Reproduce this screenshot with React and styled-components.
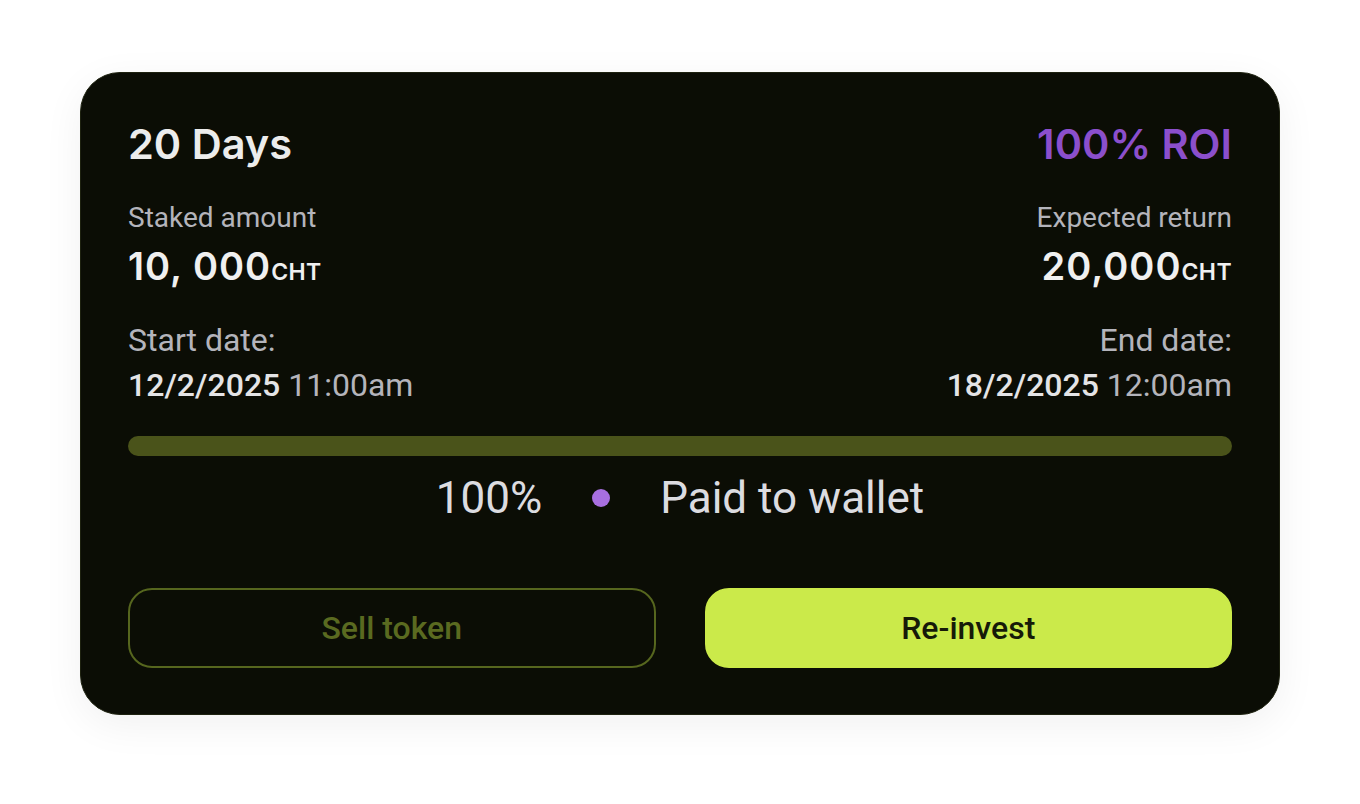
import React from "react";
import styled, {createGlobalStyle} from "styled-components";

const GlobalStyle = createGlobalStyle`
  html, body {
    margin: 0;
    padding: 0;
    background: #ffffff;
  }
  * {
    box-sizing: border-box;
  }
`;

const Page = styled.div`
  width: 1360px;
  height: 804px;
  padding-top: 72px;
  display: flex;
  justify-content: center;
  align-items: flex-start;
  background: #ffffff;
`;

const Card = styled.div`
  width: 1200px;
  height: 643px;
  padding: 47px 47px 0;
  border-radius: 40px;
  background: #0b0d05;
  border: 1px solid #1e2210;
  box-shadow: 0 10px 40px rgba(0, 0, 0, 0.06);
  display: flex;
  flex-direction: column;
`;

const Row = styled.div`
  display: flex;
  justify-content: space-between;
  align-items: flex-start;
  margin-top: ${(p) => p.$mt || 0}px;
`;

const Col = styled.div`
  display: flex;
  flex-direction: column;
  align-items: ${(p) => (p.$right ? "flex-end" : "flex-start")};
`;

const Heading = styled.div`
  font-family: Inter, "Liberation Sans", sans-serif;
  font-weight: 600;
  font-size: 41.5px;
  line-height: 48px;
  color: ${(p) => p.$color || "#ececec"};
`;

const Label = styled.div`
  font-family: Roboto, "Liberation Sans", sans-serif;
  font-size: ${(p) => p.$size}px;
  line-height: ${(p) => p.$lh}px;
  color: #b4b4bb;
`;

const Amount = styled.div`
  margin-top: 13px;
  font-family: Inter, "Liberation Sans", sans-serif;
  font-weight: 600;
  font-size: 38px;
  line-height: 40px;
  letter-spacing: 1px;
  color: #f0f0f0;
`;

const Unit = styled.span`
  font-size: 23px;
  line-height: 1;
  letter-spacing: 0.4px;
`;

const DateLine = styled.div`
  margin-top: 9px;
  font-family: Roboto, "Liberation Sans", sans-serif;
  font-size: 32px;
  line-height: 36px;
  color: #b4b4bb;
`;

const DateStrong = styled.span`
  font-weight: 500;
  color: #e4e4e6;
`;

const Track = styled.div`
  margin-top: 33px;
  height: 20px;
  border-radius: 10px;
  background: #4a531a;
`;

const Status = styled.div`
  margin-top: 18px;
  height: 48px;
  display: flex;
  justify-content: center;
  align-items: center;
  gap: 50px;
  font-family: Roboto, "Liberation Sans", sans-serif;
  font-size: 44px;
  color: #dcdce0;
`;

const Dot = styled.span`
  width: 18px;
  height: 18px;
  border-radius: 50%;
  background: #a86fe0;
`;

const Actions = styled.div`
  margin-top: 66px;
  display: grid;
  grid-template-columns: 1fr 1fr;
  gap: 49px;
`;

const Button = styled.button`
  height: 80px;
  border-radius: 24px;
  font-family: Roboto, "Liberation Sans", sans-serif;
  font-weight: 500;
  font-size: 32px;
  cursor: pointer;
  border: 2px solid ${(p) => (p.$primary ? "#cbea4a" : "#56661e")};
  background: ${(p) => (p.$primary ? "#cbea4a" : "transparent")};
  color: ${(p) => (p.$primary ? "#161a08" : "#5a6a20")};
`;

export default function App() {
  return (
    <>
      <GlobalStyle />
      <Page>
        <Card>
          <Row>
            <Heading>20 Days</Heading>
            <Heading $color="#8b4fcc">100% ROI</Heading>
          </Row>
          <Row $mt={35}>
            <Col>
              <Label $size={28} $lh={30}>Staked amount</Label>
              <Amount>10, 000<Unit>CHT</Unit></Amount>
            </Col>
            <Col $right>
              <Label $size={28} $lh={30}>Expected return</Label>
              <Amount>20,000<Unit>CHT</Unit></Amount>
            </Col>
          </Row>
          <Row $mt={36}>
            <Col>
              <Label $size={32} $lh={36}>Start date:</Label>
              <DateLine><DateStrong>12/2/2025</DateStrong> 11:00am</DateLine>
            </Col>
            <Col $right>
              <Label $size={32} $lh={36}>End date:</Label>
              <DateLine><DateStrong>18/2/2025</DateStrong> 12:00am</DateLine>
            </Col>
          </Row>
          <Track />
          <Status>
            <span>100%</span>
            <Dot />
            <span>Paid to wallet</span>
          </Status>
          <Actions>
            <Button>Sell token</Button>
            <Button $primary>Re-invest</Button>
          </Actions>
        </Card>
      </Page>
    </>
  );
}
